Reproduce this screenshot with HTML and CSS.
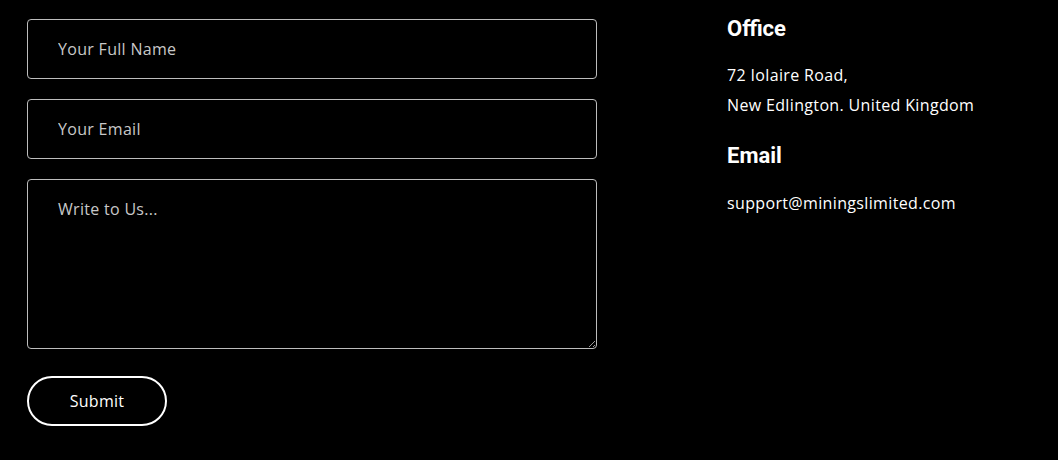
FILE: index.html
```html
<!DOCTYPE html>
<html>
<head>
<meta charset="utf-8">
<link rel="stylesheet" href="styles.css">
</head>
<body>
<div class="page">
  <form class="form">
    <input class="field" type="text" placeholder="Your Full Name">
    <input class="field" type="email" placeholder="Your Email">
    <textarea class="field area" placeholder="Write to Us..."></textarea>
    <button class="submit" type="button">Submit</button>
  </form>
  <div class="info">
    <h3 class="heading">Office</h3>
    <p class="line">72 Iolaire Road,</p>
    <p class="line">New Edlington. United Kingdom</p>
    <h3 class="heading heading-2">Email</h3>
    <p class="line">support@miningslimited.com</p>
  </div>
</div>
</body>
</html>
```
FILE: styles.css
```css
html, body {
  margin: 0;
  padding: 0;
  background: #000;
  color: #fff;
  font-family: "Open Sans", "Liberation Sans", sans-serif;
}
.page {
  display: flex;
  gap: 130px;
  padding: 19px 0 0 27px;
}
.form {
  width: 570px;
  display: flex;
  flex-direction: column;
  gap: 20px;
  margin: 0;
}
.field {
  box-sizing: border-box;
  width: 100%;
  height: 60px;
  background: #000;
  border: 1px solid #bdbdbd;
  border-radius: 4px;
  padding: 0 30px;
  color: #fff;
  font-family: inherit;
  font-size: 16px;
  letter-spacing: 0.3px;
  outline: none;
}
.field::placeholder {
  color: #c8c8c8;
}
.area {
  height: 170px;
  padding: 18px 30px;
  resize: vertical;
  display: block;
}
.submit {
  margin-top: 7px;
  width: 140px;
  height: 50px;
  background: #000;
  color: #fff;
  border: 2px solid #fff;
  border-radius: 25px;
  font-family: inherit;
  font-size: 16px;
  letter-spacing: 0.3px;
  cursor: pointer;
}
.heading {
  margin: 0 0 21px;
  font-family: Roboto, "Liberation Sans", sans-serif;
  font-weight: 700;
  font-size: 22px;
  line-height: 20px;
}
.heading-2 {
  margin-top: 26px;
  margin-bottom: 22px;
}
.line {
  margin: 0;
  font-size: 16px;
  letter-spacing: 0.35px;
  line-height: 30px;
}
```
